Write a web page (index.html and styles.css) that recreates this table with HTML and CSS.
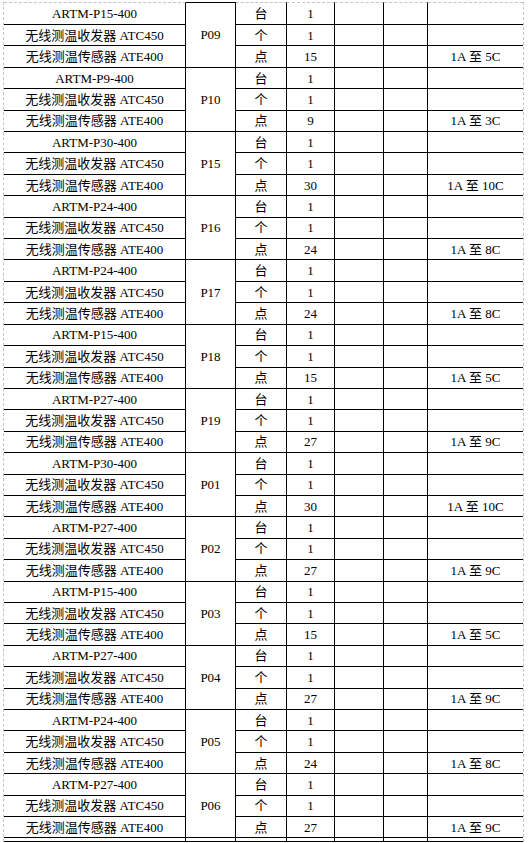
FILE: index.html
```html
<!DOCTYPE html>
<html lang="zh">
<head>
<meta charset="utf-8">
<title>无线测温清单</title>
<link rel="stylesheet" href="styles.css">
</head>
<body>
<div class="sheet">
  <!-- P09 -->
  <div class="c top">ARTM-P15-400</div><div class="c p top-solid">P09</div><div class="c top">台</div><div class="c top">1</div><div class="c top"></div><div class="c top"></div><div class="c top last"></div>
  <div class="c">无线测温收发器 ATC450</div><div class="c">个</div><div class="c">1</div><div class="c"></div><div class="c"></div><div class="c last"></div>
  <div class="c">无线测温传感器 ATE400</div><div class="c">点</div><div class="c">15</div><div class="c"></div><div class="c"></div><div class="c last">1A 至 5C</div>
  <!-- P10 -->
  <div class="c">ARTM-P9-400</div><div class="c p">P10</div><div class="c">台</div><div class="c">1</div><div class="c"></div><div class="c"></div><div class="c last"></div>
  <div class="c">无线测温收发器 ATC450</div><div class="c">个</div><div class="c">1</div><div class="c"></div><div class="c"></div><div class="c last"></div>
  <div class="c">无线测温传感器 ATE400</div><div class="c">点</div><div class="c">9</div><div class="c"></div><div class="c"></div><div class="c last">1A 至 3C</div>
  <!-- P15 -->
  <div class="c">ARTM-P30-400</div><div class="c p">P15</div><div class="c">台</div><div class="c">1</div><div class="c"></div><div class="c"></div><div class="c last"></div>
  <div class="c">无线测温收发器 ATC450</div><div class="c">个</div><div class="c">1</div><div class="c"></div><div class="c"></div><div class="c last"></div>
  <div class="c">无线测温传感器 ATE400</div><div class="c">点</div><div class="c">30</div><div class="c"></div><div class="c"></div><div class="c last">1A 至 10C</div>
  <!-- P16 -->
  <div class="c">ARTM-P24-400</div><div class="c p">P16</div><div class="c">台</div><div class="c">1</div><div class="c"></div><div class="c"></div><div class="c last"></div>
  <div class="c">无线测温收发器 ATC450</div><div class="c">个</div><div class="c">1</div><div class="c"></div><div class="c"></div><div class="c last"></div>
  <div class="c">无线测温传感器 ATE400</div><div class="c">点</div><div class="c">24</div><div class="c"></div><div class="c"></div><div class="c last">1A 至 8C</div>
  <!-- P17 -->
  <div class="c">ARTM-P24-400</div><div class="c p">P17</div><div class="c">台</div><div class="c">1</div><div class="c"></div><div class="c"></div><div class="c last"></div>
  <div class="c">无线测温收发器 ATC450</div><div class="c">个</div><div class="c">1</div><div class="c"></div><div class="c"></div><div class="c last"></div>
  <div class="c">无线测温传感器 ATE400</div><div class="c">点</div><div class="c">24</div><div class="c"></div><div class="c"></div><div class="c last">1A 至 8C</div>
  <!-- P18 -->
  <div class="c">ARTM-P15-400</div><div class="c p">P18</div><div class="c">台</div><div class="c">1</div><div class="c"></div><div class="c"></div><div class="c last"></div>
  <div class="c">无线测温收发器 ATC450</div><div class="c">个</div><div class="c">1</div><div class="c"></div><div class="c"></div><div class="c last"></div>
  <div class="c">无线测温传感器 ATE400</div><div class="c">点</div><div class="c">15</div><div class="c"></div><div class="c"></div><div class="c last">1A 至 5C</div>
  <!-- P19 -->
  <div class="c">ARTM-P27-400</div><div class="c p">P19</div><div class="c">台</div><div class="c">1</div><div class="c"></div><div class="c"></div><div class="c last"></div>
  <div class="c">无线测温收发器 ATC450</div><div class="c">个</div><div class="c">1</div><div class="c"></div><div class="c"></div><div class="c last"></div>
  <div class="c">无线测温传感器 ATE400</div><div class="c">点</div><div class="c">27</div><div class="c"></div><div class="c"></div><div class="c last">1A 至 9C</div>
  <!-- P01 -->
  <div class="c">ARTM-P30-400</div><div class="c p">P01</div><div class="c">台</div><div class="c">1</div><div class="c"></div><div class="c"></div><div class="c last"></div>
  <div class="c">无线测温收发器 ATC450</div><div class="c">个</div><div class="c">1</div><div class="c"></div><div class="c"></div><div class="c last"></div>
  <div class="c">无线测温传感器 ATE400</div><div class="c">点</div><div class="c">30</div><div class="c"></div><div class="c"></div><div class="c last">1A 至 10C</div>
  <!-- P02 -->
  <div class="c">ARTM-P27-400</div><div class="c p">P02</div><div class="c">台</div><div class="c">1</div><div class="c"></div><div class="c"></div><div class="c last"></div>
  <div class="c">无线测温收发器 ATC450</div><div class="c">个</div><div class="c">1</div><div class="c"></div><div class="c"></div><div class="c last"></div>
  <div class="c">无线测温传感器 ATE400</div><div class="c">点</div><div class="c">27</div><div class="c"></div><div class="c"></div><div class="c last">1A 至 9C</div>
  <!-- P03 -->
  <div class="c">ARTM-P15-400</div><div class="c p">P03</div><div class="c">台</div><div class="c">1</div><div class="c"></div><div class="c"></div><div class="c last"></div>
  <div class="c">无线测温收发器 ATC450</div><div class="c">个</div><div class="c">1</div><div class="c"></div><div class="c"></div><div class="c last"></div>
  <div class="c">无线测温传感器 ATE400</div><div class="c">点</div><div class="c">15</div><div class="c"></div><div class="c"></div><div class="c last">1A 至 5C</div>
  <!-- P04 -->
  <div class="c">ARTM-P27-400</div><div class="c p">P04</div><div class="c">台</div><div class="c">1</div><div class="c"></div><div class="c"></div><div class="c last"></div>
  <div class="c">无线测温收发器 ATC450</div><div class="c">个</div><div class="c">1</div><div class="c"></div><div class="c"></div><div class="c last"></div>
  <div class="c">无线测温传感器 ATE400</div><div class="c">点</div><div class="c">27</div><div class="c"></div><div class="c"></div><div class="c last">1A 至 9C</div>
  <!-- P05 -->
  <div class="c">ARTM-P24-400</div><div class="c p">P05</div><div class="c">台</div><div class="c">1</div><div class="c"></div><div class="c"></div><div class="c last"></div>
  <div class="c">无线测温收发器 ATC450</div><div class="c">个</div><div class="c">1</div><div class="c"></div><div class="c"></div><div class="c last"></div>
  <div class="c">无线测温传感器 ATE400</div><div class="c">点</div><div class="c">24</div><div class="c"></div><div class="c"></div><div class="c last">1A 至 8C</div>
  <!-- P06 -->
  <div class="c">ARTM-P27-400</div><div class="c p">P06</div><div class="c">台</div><div class="c">1</div><div class="c"></div><div class="c"></div><div class="c last"></div>
  <div class="c">无线测温收发器 ATC450</div><div class="c">个</div><div class="c">1</div><div class="c"></div><div class="c"></div><div class="c last"></div>
  <div class="c">无线测温传感器 ATE400</div><div class="c">点</div><div class="c">27</div><div class="c"></div><div class="c"></div><div class="c last">1A 至 9C</div>
  <!-- next row (cut off) -->
  <div class="c"></div><div class="c"></div><div class="c"></div><div class="c"></div><div class="c"></div><div class="c"></div><div class="c last"></div>
</div>
</body>
</html>
```
FILE: styles.css
```css
html, body {
  margin: 0;
  padding: 0;
  background: #ffffff;
  overflow: hidden;
}

.sheet {
  margin: 2px 0 0 3px;
  width: 519px;
  border-left: 1px dashed #c4c4c4;
  border-right: 1px dashed #c4c4c4;
  display: grid;
  grid-template-columns: 182px 50px 51px 48px 49px 44px 95px;
  grid-template-rows: 23px repeat(38, 21.42px) 4px;
  font-family: "Liberation Serif", "Noto Sans CJK SC", serif;
  font-size: 13px;
  color: #000000;
}

.c {
  box-sizing: border-box;
  border-right: 1px solid #000000;
  border-bottom: 1px solid #000000;
  display: flex;
  align-items: center;
  justify-content: center;
  white-space: nowrap;
  overflow: hidden;
  line-height: 1;
}

.c.last {
  border-right: none;
}

.c.top {
  border-top: 1px dashed #c4c4c4;
}

.c.top-solid {
  border-top: 1px solid #000000;
}

.c.p {
  grid-row: span 3;
}
```
